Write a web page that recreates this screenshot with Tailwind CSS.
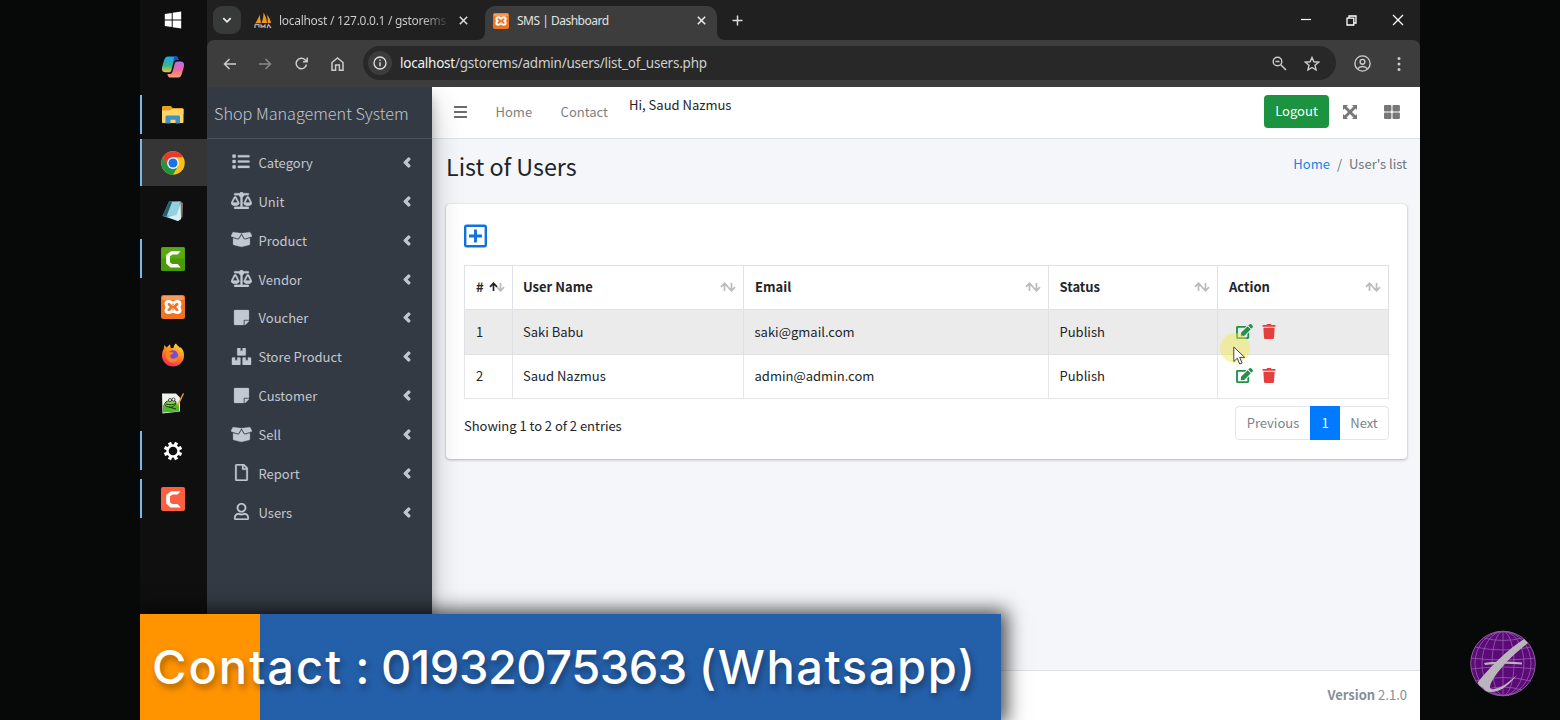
<!DOCTYPE html>
<html lang="en">
<head>
<meta charset="utf-8">
<title>SMS | Dashboard</title>
<script src="https://cdn.jsdelivr.net/npm/@tailwindcss/browser@4"></script>
</head>
<body class="relative w-[1560px] h-[720px] overflow-hidden bg-[#070909] flex justify-center font-['Noto_Sans_CJK_SC','Noto_Sans',sans-serif]">
<svg class="hidden">
  <symbol id="list" viewBox="0 0 512 512"><path d="M80 368H16a16 16 0 0 0-16 16v64a16 16 0 0 0 16 16h64a16 16 0 0 0 16-16v-64a16 16 0 0 0-16-16zm0-320H16A16 16 0 0 0 0 64v64a16 16 0 0 0 16 16h64a16 16 0 0 0 16-16V64a16 16 0 0 0-16-16zm0 160H16a16 16 0 0 0-16 16v64a16 16 0 0 0 16 16h64a16 16 0 0 0 16-16v-64a16 16 0 0 0-16-16zm416 176H176a16 16 0 0 0-16 16v32a16 16 0 0 0 16 16h320a16 16 0 0 0 16-16v-32a16 16 0 0 0-16-16zm0-320H176a16 16 0 0 0-16 16v32a16 16 0 0 0 16 16h320a16 16 0 0 0 16-16V80a16 16 0 0 0-16-16zm0 160H176a16 16 0 0 0-16 16v32a16 16 0 0 0 16 16h320a16 16 0 0 0 16-16v-32a16 16 0 0 0-16-16z"/></symbol>
  <symbol id="scale" viewBox="0 0 640 512"><path d="M256 336h-.02c0-16.18 1.34-8.73-85.05-181.51-17.65-35.29-68.19-35.36-85.87 0C-2.06 328.75.02 320.33.02 336H0c0 44.18 57.31 80 128 80s128-35.82 128-80zM128 176l72 144H56l72-144zm511.98 160c0-16.18 1.34-8.73-85.05-181.51-17.65-35.29-68.19-35.36-85.87 0-87.12 174.26-85.04 165.84-85.04 181.51H384c0 44.18 57.31 80 128 80s128-35.82 128-80h-.02zM440 320l72-144 72 144H440zm88 128H352V153.25c23.51-10.29 41.16-31.48 46.39-57.25H528c8.84 0 16-7.16 16-16V48c0-8.84-7.16-16-16-16H383.64C369.04 12.68 346.09 0 320 0s-49.04 12.68-63.64 32H112c-8.84 0-16 7.16-16 16v32c0 8.84 7.16 16 16 16h129.61c5.23 25.76 22.87 46.96 46.39 57.25V448H112c-8.84 0-16 7.16-16 16v32c0 8.84 7.16 16 16 16h416c8.84 0 16-7.16 16-16v-32c0-8.84-7.16-16-16-16z"/></symbol>
  <symbol id="box" viewBox="0 0 640 512"><path d="M425.7 256c-16.9 0-32.8-9-41.4-23.4L320 126l-64.2 106.6c-8.7 14.5-24.6 23.5-41.5 23.5-4.5 0-9-.6-13.3-1.9L64 215v178c0 14.7 10 27.5 24.2 31l216.2 54.1c10.2 2.5 20.9 2.5 31 0L551.8 424c14.2-3.6 24.2-16.4 24.2-31V215l-137 39.1c-4.3 1.3-8.8 1.9-13.3 1.9zm212.6-112.2L586.8 41c-3.1-6.2-9.8-9.8-16.7-8.9L320 64l91.7 152.1c3.8 6.3 11.4 9.3 18.5 7.3l197.9-56.5c9.9-2.9 14.7-13.9 10.2-23.1zM53.2 41L1.7 143.8c-4.6 9.2.3 20.2 10.1 23l197.9 56.5c7.1 2 14.7-1 18.5-7.3L320 64 69.8 32.1c-6.9-.8-13.5 2.7-16.6 8.9z"/></symbol>
  <symbol id="note" viewBox="0 0 448 512"><path d="M312 320h136V56c0-13.3-10.7-24-24-24H24C10.7 32 0 42.7 0 56v400c0 13.3 10.7 24 24 24h264V344c0-13.2 10.8-24 24-24zm129 55l-98 98c-4.5 4.5-10.6 7-17 7h-6V352h128v6.1c0 6.3-2.5 12.4-7 16.900z"/></symbol>
  <symbol id="boxes" viewBox="0 0 576 512"><path d="M560 288h-80v96l-32-21.3-32 21.3v-96h-80c-8.8 0-16 7.2-16 16v192c0 8.8 7.2 16 16 16h224c8.8 0 16-7.2 16-16V304c0-8.8-7.2-16-16-16zm-384-64h224c8.8 0 16-7.2 16-16V16c0-8.8-7.2-16-16-16h-80v96l-32-21.3L256 96V0h-80c-8.8 0-16 7.2-16 16v192c0 8.8 7.2 16 16 16zm64 64h-80v96l-32-21.3L96 384v-96H16c-8.8 0-16 7.2-16 16v192c0 8.8 7.2 16 16 16h224c8.8 0 16-7.2 16-16V304c0-8.8-7.2-16-16-16z"/></symbol>
  <symbol id="file" viewBox="0 0 384 512"><path d="M369.9 97.9L286 14C277 5 264.8-.1 252.1-.1H48C21.5 0 0 21.5 0 48v416c0 26.5 21.5 48 48 48h288c26.5 0 48-21.5 48-48V131.9c0-12.7-5.1-25-14.1-34zM332.1 128H256V51.9l76.1 76.1zM48 464V48h160v104c0 13.3 10.7 24 24 24h104v288H48z"/></symbol>
  <symbol id="user" viewBox="0 0 448 512"><path d="M313.6 304c-28.7 0-42.5 16-89.6 16-47.1 0-60.8-16-89.6-16C60.2 304 0 364.2 0 438.4V464c0 26.5 21.5 48 48 48h352c26.5 0 48-21.5 48-48v-25.6c0-74.2-60.2-134.4-134.4-134.4zM400 464H48v-25.6c0-47.6 38.8-86.4 86.4-86.4 14.6 0 38.3 16 89.6 16 51.7 0 74.9-16 89.6-16 47.6 0 86.4 38.8 86.4 86.4V464zM224 288c79.5 0 144-64.5 144-144S303.5 0 224 0 80 64.5 80 144s64.5 144 144 144zm0-240c52.9 0 96 43.1 96 96s-43.1 96-96 96-96-43.1-96-96 43.1-96 96-96z"/></symbol>
  <symbol id="angle" viewBox="0 0 256 512"><path d="M31.7 239l136-136c9.4-9.4 24.6-9.4 33.9 0l22.6 22.6c9.4 9.4 9.4 24.6 0 33.9L127.9 256l96.4 96.4c9.4 9.4 9.4 24.6 0 33.9L201.7 409c-9.4 9.4-24.6 9.4-33.9 0l-136-136c-9.5-9.4-9.5-24.6-.1-34z"/></symbol>
  <symbol id="trash" viewBox="0 0 448 512"><path d="M432 32H312l-9.4-18.7A24 24 0 0 0 281.1 0H166.8a23.72 23.72 0 0 0-21.4 13.3L136 32H16A16 16 0 0 0 0 48v32a16 16 0 0 0 16 16h416a16 16 0 0 0 16-16V48a16 16 0 0 0-16-16zM53.2 467a48 48 0 0 0 47.9 45h245.8a48 48 0 0 0 47.9-45L416 128H32z"/></symbol>
  <symbol id="edit" viewBox="0 0 576 512"><path d="M402.6 83.2l90.2 90.2c3.8 3.8 3.8 10 0 13.8L274.4 405.6l-92.8 10.3c-12.4 1.4-22.9-9.1-21.5-21.5l10.3-92.8L388.8 83.2c3.8-3.8 10-3.8 13.8 0zm162-22.9l-48.8-48.8c-15.2-15.2-39.9-15.2-55.2 0l-35.4 35.4c-3.8 3.8-3.8 10 0 13.8l90.2 90.2c3.8 3.8 10 3.8 13.8 0l35.4-35.4c15.2-15.3 15.2-40 0-55.2zM384 346.2V448H64V128h229.8c3.2 0 6.2-1.3 8.5-3.5l40-40c7.6-7.6 2.2-20.5-8.5-20.5H48C21.5 64 0 85.5 0 112v352c0 26.5 21.5 48 48 48h352c26.5 0 48-21.5 48-48V306.2c0-10.7-12.9-16-20.5-8.5l-40 40c-2.2 2.3-3.5 5.3-3.5 8.5z"/></symbol>
  <symbol id="sort" viewBox="0 0 16 10"><path d="M4.500 9V1.500M1 4.800l3.500-3.600L8 4.800M11.500 1v7.500M8 5.200l3.500 3.600L15 5.200" fill="none" stroke="currentColor" stroke-width="1.700"/></symbol>
  <symbol id="xampp" viewBox="0 0 24 24"><rect width="24" height="24" rx="2.500" fill="#f07420"/><rect x="1" y="1" width="22" height="4" rx="2" fill="#f79c5d"/><path d="M12 9.300C10 5.500 5 5.800 5 9c0 1.800.8 2.400 2 3-1.200.6-2 1.400-2 3 0 3.200 5 3.500 7-.2 2 3.700 7 3.400 7 .2 0-1.600-.8-2.400-2-3 1.200-.6 2-1.200 2-3 0-3.200-5-3.500-7 .3z" fill="none" stroke="#fff" stroke-width="3" stroke-linejoin="round"/><path d="M12 8.500v2M12 13.500v2" stroke="#f07420" stroke-width="1.200"/></symbol>
  <symbol id="camtasia" viewBox="0 0 24 24"><path d="M19.600 4.300H10L5.200 8v8.500l4.300 4h10.200l-3.200-3.400h-5.200L9 15.500V9.200l2.500-1.600h5z" fill="#fff"/></symbol>
</svg>

<div class="relative w-[1280px] h-[720px] flex overflow-hidden">
  <!-- Taskbar -->
  <aside class="w-[67px] shrink-0 h-full bg-[#0f0f0f] flex flex-col">
    <div class="h-[43px] flex items-center justify-center pb-[3px] pr-px">
      <svg class="w-[18px] h-[18px]" viewBox="0 0 18 18" fill="#fff"><path d="M.8 3 7.700 2v6.500H.8zM8.700 1.800 17.200.6v7.900H8.700zM.8 9.500h6.900V16L.8 15zM8.700 9.500h8.500v7.900l-8.500-1.200z"/></svg>
    </div>
    <div class="h-12 flex items-center justify-center pr-px">
      <svg class="w-[24px] h-[24px]" viewBox="0 0 24 24"><defs><linearGradient id="cpa" x1="0" y1="0" x2="0" y2="1"><stop offset="0" stop-color="#20a7ee"/><stop offset=".55" stop-color="#35b58c"/><stop offset="1" stop-color="#e6c83c"/></linearGradient><linearGradient id="cpb" x1="0" y1="0" x2="0" y2="1"><stop offset="0" stop-color="#b06ff0"/><stop offset=".5" stop-color="#f0679a"/><stop offset="1" stop-color="#f8a16a"/></linearGradient></defs><path d="M7 1.500h8c1.700 0 2 1.700 2.600 3.500h-2.400c-1.800 0-2.400 1-2.900 2.700L10.500 15c-.4 1.600-1.200 2.300-2.700 2.300H4.300C1 17.300.4 14.500 1.300 11.300L3.200 5C4 2.700 5 1.500 7 1.500z" fill="url(#cpa)"/><path d="M13 1.500h2c1.700 0 2 1.700 2.600 3.500h-2.400c-1.800 0-2.400 1-2.900 2.700z" fill="#1750c8"/><path d="M16.500 6.500h3.200c3.300 0 3.900 2.800 3 6L20.800 19c-.8 2.400-1.800 3.600-3.800 3.600H9c-1.700 0-2.100-1.800-2.700-3.600h2.500c1.700 0 2.300-1 2.800-2.700l2.100-7.500c.4-1.600 1.300-2.300 2.800-2.300z" fill="url(#cpb)"/></svg>
    </div>
    <div class="relative h-12 flex items-center justify-center pr-px"><span class="absolute left-0 top-[4px] h-[39px] w-[2px] bg-[#76b9ed]"></span>
      <svg class="w-[22px] h-[20px]" viewBox="0 0 22 20"><path d="M0 2.500C0 1.500.5 1 1.500 1H9l1.500 2H20c1 0 1.500.5 1.500 1.500V9H0z" fill="#e5a020"/><path d="M0 5.500h8L10 4h11.500v13c0 .6-.5 1-1 1H1c-.6 0-1-.4-1-1z" fill="#fed466"/><path d="M3.500 18.500V12c0-1 .6-1.600 1.600-1.600h11.300c1 0 1.600.6 1.600 1.600v6.500h-4.500v-3.700h-5v3.700z" fill="#3d91c7"/></svg>
    </div>
    <div class="relative h-[47px] bg-[#353535] flex items-center justify-center pr-px"><span class="absolute left-0 top-0 h-full w-[2px] bg-[#76b9ed]"></span>
      <svg class="w-[24px] h-[24px]" viewBox="0 0 48 48"><circle cx="24" cy="24" r="23.500" fill="#fbc116"/><path d="M24 24 34 30 24 47.500A23.500 23.500 0 0 1 3.650 12.250L14 30z" fill="#229342"/><path d="M3.650 12.250A23.500 23.500 0 0 1 44.350 12.250H24L13.800 30z" fill="#e33b2e"/><circle cx="24" cy="24" r="11.750" fill="#fff"/><circle cx="24" cy="24" r="9.200" fill="#1a73e8"/></svg>
    </div>
    <div class="h-12 flex items-center justify-center pr-px pt-px">
      <svg class="w-[22px] h-[22px]" viewBox="0 0 22 22"><path d="M18 1l3 2-.5 14-4 4z" fill="#8d7357"/><path d="M7 1.500 18.500 1 19 19l-3 2L.5 16z" fill="#5fa8bf"/><path d="M7.500 2H18l-3 14-13.500-.5z" fill="#95d0df"/><path d="M7 2 .5 15.500l4 1L10 2z" fill="#285d70"/><path d="m14.500 15 4-12 .5 16-3 2-11-4z" fill="#d9eef4"/></svg>
    </div>
    <div class="relative h-12 flex items-center justify-center pr-px pt-px"><span class="absolute left-0 top-[5px] h-[39px] w-[2px] bg-[#76b9ed]"></span>
      <svg class="w-[24px] h-[24px]" viewBox="0 0 24 24"><rect width="24" height="24" rx="1.500" fill="#4a9a05"/><rect x=".5" y=".5" width="23" height="11" rx="1.500" fill="#5aa814"/><use href="#camtasia"/></svg>
    </div>
    <div class="h-12 flex items-center justify-center pr-px pt-px"><svg class="w-[24px] h-[24px]"><use href="#xampp"/></svg></div>
    <div class="h-12 flex items-center justify-center pr-px pt-px">
      <svg class="w-[24px] h-[24px]" viewBox="0 0 24 24"><defs><linearGradient id="ffx" x1=".8" y1="0" x2=".3" y2="1"><stop offset="0" stop-color="#ffe13c"/><stop offset=".45" stop-color="#ff8a1e"/><stop offset="1" stop-color="#f0265e"/></linearGradient></defs><path d="M15 .5c1 2 2.500 2.500 3.800 4.200l.9-.5c2.200 2.300 3.500 5 3.300 8.300A11 11 0 0 1 1 12.500C1 9 2 6.800 3 5.500L3.200 2l2.500 2.600L9 1.200l.8 4 2.700-.2C12.600 3 13.400 1.500 15 .5z" fill="url(#ffx)"/><circle cx="12" cy="12.300" r="5" fill="#7d4ad6"/><path d="M5 8.500c2-.8 3.500 0 4.800.5l2.700.7c-.6 1.600-3 1.200-3.300 3-.2 1.900 1.500 3 3.200 3 2 0 3.500-1 4-2.500 1 4-2 6.300-5 6.300-4 0-7-3.500-6.400-11z" fill="#ff8420"/></svg>
    </div>
    <div class="h-12 flex items-center justify-center pr-px pt-px">
      <svg class="w-[24px] h-[24px]" viewBox="0 0 24 24"><path d="M1 2.500h14l4 4v14L1.500 22.500z" fill="#eef3ee"/><path d="M2 14c5-2 10-2 16-1v7.500L2 21.500z" fill="#4db82a"/><path d="M4 12c2-3 10-4 11-1 0 3-3 5.500-7 5-3-.5-5-2-4-4z" fill="#7fd13b" stroke="#1f3c14" stroke-width="1"/><circle cx="9" cy="9" r="1.500" fill="#fff" stroke="#222" stroke-width=".8"/><circle cx="12.500" cy="8.500" r="1.500" fill="#fff" stroke="#222" stroke-width=".8"/><path d="M5 13c4 1 7 1 9.500-.5M8 16l7 2" stroke="#183510" fill="none"/><path d="m15.500 16 1-3.500L22 2l1 .8-5.200 11z" fill="#e8a33a"/></svg>
    </div>
    <div class="relative h-12 flex items-center justify-center pr-px pt-px"><span class="absolute left-0 top-[5px] h-[39px] w-[2px] bg-[#76b9ed]"></span>
      <svg class="w-[20px] h-[20px]" viewBox="0 0 20 20"><circle cx="10" cy="10" r="5.500" fill="none" stroke="#fff" stroke-width="2.400"/><g stroke="#fff" stroke-width="3.400"><path d="M10 4.500V.8M10 15.500v3.700M4.500 10H.8M15.500 10h3.700" transform="rotate(22.500 10 10)"/><path d="M10 4.500V.8M10 15.500v3.700M4.500 10H.8M15.500 10h3.700" transform="rotate(67.500 10 10)"/></g></svg>
    </div>
    <div class="relative h-12 flex items-center justify-center pr-px pt-px"><span class="absolute left-0 top-[5px] h-[39px] w-[2px] bg-[#76b9ed]"></span>
      <svg class="w-[24px] h-[24px]" viewBox="0 0 24 24"><rect width="24" height="24" rx="2" fill="#fb5f41"/><use href="#camtasia"/></svg>
    </div>
  </aside>

  <!-- Browser -->
  <div class="flex-1 flex flex-col min-w-0">
    <div class="h-10 bg-[#202020] flex items-start font-['Noto_Sans',sans-serif] text-[12px] text-[#d0d0d0]">
      <div class="ml-[6px] mt-[6px] w-[28px] h-[28px] rounded-[9px] bg-[#383a39] flex items-center justify-center"><svg class="w-[10px] h-[7px]" viewBox="0 0 10 7"><path d="m1.300 1.200 3.700 3.700 3.700-3.700" fill="none" stroke="#eee" stroke-width="1.700"/></svg></div>
      <div class="w-[244px] h-10 pl-[13px] pr-[17px] flex items-center">
        <svg class="w-[18px] h-[17px]" viewBox="0 0 18 17"><path d="M1.500 11C3.500 8 5 5 5.500 2.500L7 11zM7.500 11C9 8 9.500 4 9.500.5c2 3 3.300 7 3.500 10.500zM13.500 11c.5-3 0-6-.8-8.500 2.300 2.500 4 5.500 4.300 8.500z" fill="#f0951f"/><path d="M1 12.500h4v3M7 16v-3l2 2 2-2v3M13 16l1.500-3.500L17 16M1 16v-3.500" fill="none" stroke="#a9a6c6" stroke-width="1.300"/></svg>
        <span class="ml-[7px] pt-px w-[167px] whitespace-nowrap leading-5 bg-[linear-gradient(to_right,#d0d0d0_86%,#3a3a3a_100%)] bg-clip-text text-transparent tracking-[-0.290px]">localhost / 127.0.0.1 / gstorems</span>
        <svg class="ml-auto w-[9px] h-[9px]" viewBox="0 0 9 9"><path d="m.8.8 7.400 7.400M8.200.8.8 8.200" stroke="#ddd" stroke-width="1.500"/></svg>
      </div>
      <div class="relative w-[232px] h-[34px] mt-[6px] bg-[#3c3d3c] rounded-t-[10px] pl-[8px] pr-[11px] pb-[5px] flex items-center text-[#e3e3e3]">
        <svg class="absolute -left-[8px] bottom-0 w-[8px] h-[8px]" viewBox="0 0 8 8"><path d="M8 0v8H0c4.500 0 8-3.500 8-8z" fill="#3c3d3c"/></svg>
        <svg class="absolute -right-[8px] bottom-0 w-[8px] h-[8px]" viewBox="0 0 8 8"><path d="M0 0v8h8C3.500 8 0 4.500 0 0z" fill="#3c3d3c"/></svg>
        <svg class="w-[16px] h-[16px]"><use href="#xampp"/></svg>
        <span class="ml-[8px] pt-px whitespace-nowrap leading-5 tracking-[-0.500px]">SMS | Dashboard</span>
        <svg class="ml-auto w-[9px] h-[9px]" viewBox="0 0 9 9"><path d="m.8.8 7.400 7.400M8.200.8.8 8.200" stroke="#eee" stroke-width="1.500"/></svg>
      </div>
      <svg class="ml-[15px] mt-[15px] w-[11px] h-[11px]" viewBox="0 0 11 11"><path d="M5.500.5v10M.5 5.500h10" stroke="#ddd" stroke-width="1.500"/></svg>
      <div class="ml-auto mr-[16px] h-10 flex items-center gap-[35px]">
        <svg class="w-[10px] h-[12px]" viewBox="0 0 10 12"><path d="M0 5.500h10" stroke="#fff" stroke-width="1.200"/></svg>
        <svg class="w-[11px] h-[11px]" viewBox="0 0 11 11"><path d="M1 3.200h6.800V10H1zM3 3V1h7v7H8" fill="none" stroke="#fff" stroke-width="1.300"/></svg>
        <svg class="w-[12px] h-[12px]" viewBox="0 0 12 12"><path d="m1 1 10 10M11 1 1 11" stroke="#fff" stroke-width="1.300"/></svg>
      </div>
    </div>
    <div class="h-[47px] shrink-0 bg-[#202020]">
    <div class="h-[47px] bg-[#3c3d3c] rounded-t-[7px] flex items-center">
      <svg class="ml-[16px] w-[13px] h-[12px]" viewBox="0 0 13 12"><path d="M13 6H1.500M6.500 1l-5 5 5 5" fill="none" stroke="#ccc" stroke-width="1.500"/></svg>
      <svg class="ml-[23px] w-[13px] h-[12px]" viewBox="0 0 13 12"><path d="M0 6h11.500M6.500 1l5 5-5 5" fill="none" stroke="#888" stroke-width="1.500"/></svg>
      <svg class="ml-[23px] w-[13px] h-[13px]" viewBox="0 0 13 13"><path d="M11.500 7.500a5.200 5.200 0 1 1-1.300-4.600L12 4.500M12.200.5v4.200H8" fill="none" stroke="#ccc" stroke-width="1.500"/></svg>
      <svg class="ml-[23px] w-[13px] h-[14px]" viewBox="0 0 13 14"><path d="M1 5.500 6.500 1 12 5.500v7.700H8.400V8H4.600v5.200H1z" fill="none" stroke="#ccc" stroke-width="1.500"/></svg>
      <div class="ml-[19px] mb-[1px] w-[973px] h-[34px] rounded-full bg-[#282828] flex items-center pl-[5px] pr-[16px]">
        <div class="w-[24px] h-[24px] rounded-full bg-[#3c3c3c] flex items-center justify-center"><svg class="w-[14px] h-[14px]" viewBox="0 0 14 14"><circle cx="7" cy="7" r="6" fill="none" stroke="#e0e0e0" stroke-width="1.300"/><path d="M7 6.200v4M7 3.600V5" stroke="#e0e0e0" stroke-width="1.400"/></svg></div>
        <span class="ml-[8px] font-['Noto_Sans',sans-serif] text-[13.500px] leading-5 text-[#cfcfcf] tracking-[-0.230px]"><span class="text-[#f0f0f0]">localhost</span>/gstorems/admin/users/list_of_users.php</span>
        <svg class="ml-auto w-[15px] h-[15px]" viewBox="0 0 15 15"><circle cx="5.500" cy="5.500" r="4.300" fill="none" stroke="#ccc" stroke-width="1.400"/><path d="m8.700 8.700 5.300 5.300M3.500 5.500h4" stroke="#ccc" stroke-width="1.500"/></svg>
        <svg class="ml-[17px] w-[16px] h-[15px]" viewBox="0 0 16 15"><path d="m8 1.500 1.900 4.300 4.700.4-3.600 3.100 1.100 4.600L8 11.500l-4.100 2.400L5 9.300 1.400 6.200l4.700-.4z" fill="none" stroke="#ccc" stroke-width="1.400"/></svg>
      </div>
      <svg class="ml-[18px] w-[17px] h-[17px]" viewBox="0 0 17 17"><g fill="none" stroke="#ccc" stroke-width="1.400"><circle cx="8.500" cy="8.500" r="7.600"/><circle cx="8.500" cy="6.800" r="2.400"/><path d="M3.500 13.800c2.500-3 7.500-3 10 0"/></g></svg>
      <svg class="ml-[26px] w-[4px] h-[14px]" viewBox="0 0 4 14" fill="#ccc"><circle cx="2" cy="1.600" r="1.500"/><circle cx="2" cy="7" r="1.500"/><circle cx="2" cy="12.400" r="1.500"/></svg>
    </div>
    </div>

    <!-- Page -->
    <div class="flex-1 flex min-h-0 bg-[#f4f6f9]">
      <nav class="relative z-10 w-[225px] shrink-0 bg-[#343a44] shadow-[0_14px_28px_rgba(0,0,0,.25),0_10px_10px_rgba(0,0,0,.22)] [clip-path:inset(0_-60px_0_0)] text-[#c2c7d0]">
        <div class="h-[52px] border-b border-[#4b5059] pl-[7px] text-[16.200px] font-light leading-[52px] whitespace-nowrap">Shop Management System</div>
        <ul class="pt-[4.500px] text-[13px] stroke-[#c2c7d0] [stroke-width:8]">
          <li class="h-[38.880px] flex items-center pl-[25px] pr-[21px]"><svg class="w-[18px] h-[17px] mb-[2px]" fill="currentColor"><use href="#list"/></svg><span class="ml-[8.500px] leading-5">Category</span><svg class="ml-auto mb-px w-[8px] h-[15px] [stroke-width:36]" fill="currentColor"><use href="#angle"/></svg></li>
          <li class="h-[38.880px] flex items-center pl-[24px] pr-[21px]"><svg class="w-[21px] h-[17px] mb-[2px]" fill="currentColor"><use href="#scale"/></svg><span class="ml-[6.500px] leading-5">Unit</span><svg class="ml-auto mb-px w-[8px] h-[15px] [stroke-width:36]" fill="currentColor"><use href="#angle"/></svg></li>
          <li class="h-[38.880px] flex items-center pl-[24px] pr-[21px]"><svg class="w-[21px] h-[17px] mb-[2px]" fill="currentColor"><use href="#box"/></svg><span class="ml-[6.500px] leading-5">Product</span><svg class="ml-auto mb-px w-[8px] h-[15px] [stroke-width:36]" fill="currentColor"><use href="#angle"/></svg></li>
          <li class="h-[38.880px] flex items-center pl-[24px] pr-[21px]"><svg class="w-[21px] h-[17px] mb-[2px]" fill="currentColor"><use href="#scale"/></svg><span class="ml-[6.500px] leading-5">Vendor</span><svg class="ml-auto mb-px w-[8px] h-[15px] [stroke-width:36]" fill="currentColor"><use href="#angle"/></svg></li>
          <li class="h-[38.880px] flex items-center pl-[24px] pr-[21px]"><svg class="w-[21px] h-[17px] mb-[2px]" fill="currentColor"><use href="#note"/></svg><span class="ml-[6.500px] leading-5">Voucher</span><svg class="ml-auto mb-px w-[8px] h-[15px] [stroke-width:36]" fill="currentColor"><use href="#angle"/></svg></li>
          <li class="h-[38.880px] flex items-center pl-[24px] pr-[21px]"><svg class="w-[21px] h-[17px] mb-[2px]" fill="currentColor"><use href="#boxes"/></svg><span class="ml-[6.500px] leading-5">Store Product</span><svg class="ml-auto mb-px w-[8px] h-[15px] [stroke-width:36]" fill="currentColor"><use href="#angle"/></svg></li>
          <li class="h-[38.880px] flex items-center pl-[24px] pr-[21px]"><svg class="w-[21px] h-[17px] mb-[2px]" fill="currentColor"><use href="#note"/></svg><span class="ml-[6.500px] leading-5">Customer</span><svg class="ml-auto mb-px w-[8px] h-[15px] [stroke-width:36]" fill="currentColor"><use href="#angle"/></svg></li>
          <li class="h-[38.880px] flex items-center pl-[24px] pr-[21px]"><svg class="w-[21px] h-[17px] mb-[2px]" fill="currentColor"><use href="#box"/></svg><span class="ml-[6.500px] leading-5">Sell</span><svg class="ml-auto mb-px w-[8px] h-[15px] [stroke-width:36]" fill="currentColor"><use href="#angle"/></svg></li>
          <li class="h-[38.880px] flex items-center pl-[24px] pr-[21px]"><svg class="w-[21px] h-[17px] mb-[2px]" fill="currentColor"><use href="#file"/></svg><span class="ml-[6.500px] leading-5">Report</span><svg class="ml-auto mb-px w-[8px] h-[15px] [stroke-width:36]" fill="currentColor"><use href="#angle"/></svg></li>
          <li class="h-[38.880px] flex items-center pl-[24px] pr-[21px]"><svg class="w-[21px] h-[17px] mb-[2px]" fill="currentColor"><use href="#user"/></svg><span class="ml-[6.500px] leading-5">Users</span><svg class="ml-auto mb-px w-[8px] h-[15px] [stroke-width:36]" fill="currentColor"><use href="#angle"/></svg></li>
        </ul>
      </nav>
      <div class="flex-1 flex flex-col min-w-0 text-[13px] text-[#212529]">
        <header class="h-[52px] shrink-0 bg-white border-b border-[#dee2e6] flex items-start text-[#7f7f7f]">
          <svg class="ml-[22px] mt-[19px] w-[13px] h-[12px]" viewBox="0 0 13 12"><path d="M0 1h13M0 6h13M0 11h13" stroke="#6d6d6d" stroke-width="2"/></svg>
          <span class="ml-[28.500px] mt-[15px] leading-5">Home</span>
          <span class="ml-[28.500px] mt-[15px] leading-5">Contact</span>
          <span class="ml-[21px] mt-[8px] leading-5 text-[#212529]">Hi, Saud Nazmus</span>
          <button class="ml-auto mt-[8px] w-[65px] h-[33px] pb-px rounded-[4px] bg-[#1c9341] text-white leading-5">Logout</button>
          <svg class="ml-[14px] mt-[18px] w-[14px] h-[14px]" viewBox="0 0 14 14" fill="#777"><path d="M0 0h5L3.500 1.500 7 5l3.500-3.500L9 0h5v5l-1.500-1.500L9 7l3.500 3.500L14 9v5H9l1.500-1.500L7 9l-3.500 3.500L5 14H0V9l1.500 1.500L5 7 1.500 3.500 0 5z"/></svg>
          <svg class="ml-[27px] mr-[20px] mt-[18px] w-[16px] h-[14px]" viewBox="0 0 16 14" fill="#777"><rect width="7.400" height="6.400" rx="1"/><rect x="8.500" width="7.400" height="6.400" rx="1"/><rect y="7.500" width="7.400" height="6.400" rx="1"/><rect x="8.500" y="7.500" width="7.400" height="6.400" rx="1"/></svg>
        </header>
        <div class="h-[65px] shrink-0 pl-[14px] pr-[13px] flex justify-between">
          <h1 class="text-[23.300px] leading-[54px]">List of Users</h1>
          <div class="mt-[15px] leading-5 text-[#6c757d] flex gap-[7px]"><a class="text-[#1b7fe8]">Home</a><span>/</span><span>User's list</span></div>
        </div>
        <section class="ml-[14px] w-[961px] h-[255px] shrink-0 bg-white rounded-[4px] shadow-[0_0_1px_rgba(0,0,0,.2),0_1px_3px_rgba(0,0,0,.25)] pl-[18px] pr-[18px] pt-[20px]">
          <svg class="w-[23px] h-[24px]" viewBox="0 0 23 24"><rect x="1.200" y="1.700" width="20.600" height="20.600" rx="1.500" fill="none" stroke="#0f72e0" stroke-width="2.400"/><path d="M11.500 5.500v13M5 12h13" stroke="#0f72e0" stroke-width="2.900"/></svg>
          <table class="mt-[17px] w-[925px] table-fixed border-collapse text-left leading-5">
            <colgroup><col class="w-[48px]"><col class="w-[231px]"><col class="w-[305px]"><col class="w-[169px]"><col class="w-[171px]"></colgroup>
            <thead><tr class="h-[44px] font-bold">
              <th class="border border-[#dee2e6] pl-[11px] pr-0 pt-0 pb-[2px]"><div class="flex items-center">#<svg class="ml-[5px] w-[16px] h-[10px]" viewBox="0 0 16 10" fill="none" stroke-width="1.700"><path d="M11.500 1v7.500M8 5.200l3.500 3.600L15 5.200" stroke="#bbb"/><path d="M4.500 9V1.500M1 4.800l3.500-3.600L8 4.800" stroke="#222"/></svg></div></th>
              <th class="border border-[#dee2e6] pl-[10px] pr-[7px] pt-0 pb-[2px]"><div class="flex items-center justify-between">User Name<svg class="w-[16px] h-[10px] text-[#bbb]"><use href="#sort"/></svg></div></th>
              <th class="border border-[#dee2e6] pl-[11px] pr-[7px] pt-0 pb-[2px]"><div class="flex items-center justify-between">Email<svg class="w-[16px] h-[10px] text-[#bbb]"><use href="#sort"/></svg></div></th>
              <th class="border border-[#dee2e6] pl-[10.500px] pr-[7px] pt-0 pb-[2px]"><div class="flex items-center justify-between">Status<svg class="w-[16px] h-[10px] text-[#bbb]"><use href="#sort"/></svg></div></th>
              <th class="border border-[#dee2e6] pl-[11px] pr-[7px] pt-0 pb-[2px]"><div class="flex items-center justify-between">Action<svg class="w-[16px] h-[10px] text-[#bbb]"><use href="#sort"/></svg></div></th>
            </tr></thead>
            <tbody>
              <tr class="h-[45px] bg-[#ebebeb]"><td class="border border-[#dee0e3] pl-[11px]">1</td><td class="border border-[#dee0e3] pl-[10px]">Saki Babu</td><td class="border border-[#dee0e3] pl-[10.500px]">saki@gmail.com</td><td class="border border-[#dee0e3] pl-[10.500px]">Publish</td><td class="border border-[#dee0e3] pl-[18px] pb-px"><div class="flex items-center gap-[9px]"><svg class="w-[17px] h-[15px] fill-[#21924a]"><use href="#edit"/></svg><svg class="w-[14px] h-[15px] fill-[#e53e3e]"><use href="#trash"/></svg></div></td></tr>
              <tr class="h-[44px]"><td class="border border-[#e4e6e9] pl-[11px] pb-[2px]">2</td><td class="border border-[#e4e6e9] pl-[10px] pb-[2px]">Saud Nazmus</td><td class="border border-[#e4e6e9] pl-[10.500px] pb-[2px]">admin@admin.com</td><td class="border border-[#e4e6e9] pl-[10.500px] pb-[2px]">Publish</td><td class="border border-[#e4e6e9] pl-[18px] pb-[2px]"><div class="flex items-center gap-[9px]"><svg class="w-[17px] h-[15px] fill-[#21924a]"><use href="#edit"/></svg><svg class="w-[14px] h-[15px] fill-[#e53e3e]"><use href="#trash"/></svg></div></td></tr>
            </tbody>
          </table>
          <div class="mt-[7px] flex justify-between">
            <span class="mt-[10px] leading-5 tracking-[-0.030px]">Showing 1 to 2 of 2 entries</span>
            <div class="h-[34px] w-[154px] flex rounded-[4px] border border-[#e3e6e9] text-[#7b838b] leading-[31px] text-center"><span class="w-[74px]">Previous</span><span class="w-[30px] -my-px leading-[33px] bg-[#007bff] text-white">1</span><span class="flex-1">Next</span></div>
          </div>
        </section>
        <footer class="mt-auto h-[50px] shrink-0 bg-white border-t border-[#dee2e6] pr-[13px] text-right leading-[48px] text-[#869099]"><b>Version</b> 2.1.0</footer>
      </div>
    </div>
  </div>

  <!-- Mouse pointer with highlight -->
  <div class="absolute z-20 left-[1080px] top-[333px] w-[30px] h-[30px] rounded-full bg-[#f3e84a]/45"></div>
  <svg class="absolute z-20 left-[1093px] top-[346px] w-[13px] h-[20px]" viewBox="0 0 13 20"><path d="M.8 1v14.500l3.500-3.300 2.400 5.800 2.400-1-2.400-5.600h5z" fill="#fff" stroke="#444" stroke-width="1"/></svg>

  <!-- Contact banner -->
  <div class="absolute z-30 left-0 top-[614px] w-[861px] h-[106px] bg-[linear-gradient(to_right,#ff9300_120px,#245fa9_120px)] shadow-[2px_0_18px_4px_rgba(0,0,0,.7)] pl-[12px] pt-[29px] text-white font-['Inter',sans-serif] font-medium text-[47px] leading-none whitespace-nowrap [text-shadow:2px_4px_6px_rgba(0,0,0,.35)]"><span class="tracking-[2px]">Contact</span><span class="tracking-[-0.500px]"> : 01932075363 </span><span class="tracking-[1.600px]">(Whatsapp)</span></div>
</div>

<!-- Channel logo -->
<svg class="absolute left-[1470px] top-[630px] w-[67px] h-[67px]" viewBox="0 0 67 67"><circle cx="33" cy="33.500" r="32.300" fill="#5b0a78" stroke="#8a5f9c" stroke-width="1"/><g fill="none" stroke="#8f56a6" stroke-width=".9"><path d="M33 1v65M5 17q28 6 56 0M1 28q32 4 64 0M1 39q32-4 64 0M5 51q28-7 56 0M14 8q19 5 38 0M14 60q19-6 38 0"/><ellipse cx="33" cy="33.500" rx="11" ry="32"/><ellipse cx="33" cy="33.500" rx="21" ry="32"/><ellipse cx="33" cy="33.500" rx="28" ry="32"/></g><path d="M54 9 58 13C45 23 29 38 21 53c-2 5-1 7 3 6 8-1 16-8 23-14-6 8-16 17-25 17-4 0-6 0-9-4-4-3-5-3-5-6C20 37 37 20 54 9z" fill="#b9b5bb"/><path d="M14 33c12-2 25-2 38-.5v2c-13-1-26-1-37 .5z" fill="#b9b5bb"/></svg>
</body>
</html>
